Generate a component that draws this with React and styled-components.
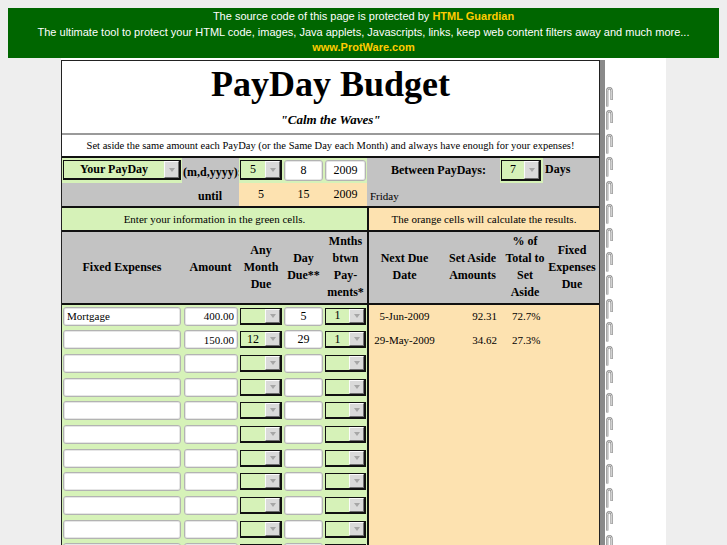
import React from 'react';
import styled, { createGlobalStyle } from 'styled-components';

const LEFT_COLS = '120px 57px 44px 41px 43px';
const MAIN_COLS = `${LEFT_COLS} 2px 71px 65px 40px 54px`;
const PAY_COLS = `${LEFT_COLS} 133px 43px 56px`;

const tones = {
  green: '#d6f2b8',
  gray: '#c3c3c3',
  orange: '#fde2b0',
  black: '#111111',
};

const GlobalStyle = createGlobalStyle`
  body {
    margin: 8px;
    background: #eeeeee;
    font-family: "Liberation Serif", "Times New Roman", serif;
    color: #000;
  }
`;

const Banner = styled.div`
  background: #006600;
  color: #fff;
  font: 11px/15.5px "Liberation Sans", Arial, sans-serif;
  text-align: center;
  padding: 1px 0 2px;
`;

const BannerLink = styled.span`
  color: #ffcc00;
  font-weight: bold;
`;

const Page = styled.div`
  width: 605px;
  margin: 0 auto;
  padding-top: 2px;
  background: #fff;
  display: flex;
  align-items: flex-start;
`;

const Sheet = styled.div`
  width: 537px;
  border: 1px solid #222;
  border-bottom: none;
  box-shadow: 5px 0 0 #8a8a8a;
  background: #fff;
`;

const Binder = styled.div`
  margin-left: 5px;
  padding-top: 27px;
  display: flex;
  flex-direction: column;
  gap: 3.6px;
`;

const TitleBlock = styled.div`
  height: 72px;
  border-bottom: 2px solid #9a9a9a;
  text-align: center;
`;

const Title = styled.h1`
  margin: 0;
  padding-top: 3px;
  font: bold 36px/41px "Liberation Serif", serif;
`;

const Subtitle = styled.div`
  margin-top: 7px;
  font: italic bold 13px/15px "Liberation Serif", serif;
`;

const Intro = styled.div`
  height: 21px;
  border-bottom: 2px solid #111;
  display: flex;
  align-items: center;
  justify-content: center;
  font-size: 10.5px;
`;

const Row = styled.div`
  display: grid;
  grid-template-columns: ${({ $cols }) => $cols};
  height: ${({ $h }) => $h}px;
  border-bottom: ${({ $rule }) => ($rule ? '2px solid #111' : 'none')};
`;

const Cell = styled.div`
  grid-column: span ${({ $span }) => $span || 1};
  background: ${({ $tone }) => tones[$tone]};
  display: flex;
  align-items: ${({ $valign }) => $valign || 'center'};
  justify-content: ${({ $justify }) => $justify || 'center'};
  padding: ${({ $pad }) => $pad || '0'};
  font-size: ${({ $size }) => $size || 12}px;
  font-weight: ${({ $bold }) => ($bold ? 'bold' : 'normal')};
  white-space: nowrap;
  min-width: 0;
`;

const HeadCell = styled.div`
  background: ${({ $tone }) => tones[$tone || 'gray']};
  display: flex;
  align-items: center;
  justify-content: center;
  text-align: center;
  font: bold 12px/17px "Liberation Serif", serif;
`;

const DataRow = styled.div`
  display: grid;
  grid-template-columns: ${MAIN_COLS};
  height: 23.67px;
`;

const EntryCell = styled.div`
  background: ${tones.green};
  display: flex;
  align-items: center;
  padding: 0 1px;
`;

const Divider = styled.div`
  background: ${tones.black};
`;

const ResultCell = styled.div`
  background: ${tones.orange};
  display: flex;
  align-items: center;
  justify-content: ${({ $justify }) => $justify || 'center'};
  padding: ${({ $pad }) => $pad || '0'};
  font-size: 11px;
  white-space: nowrap;
`;

const Field = styled.input`
  width: 100%;
  height: ${({ $h }) => $h || 19}px;
  box-sizing: border-box;
  border: 1px solid #b3b3b3;
  border-radius: 3px;
  box-shadow: inset 0 0 0 1px #e6e6e6;
  background: #fff;
  padding: 0 3px;
  color: #000;
  font: ${({ $size }) => $size || 11}px "Liberation Serif", serif;
  text-align: ${({ $align }) => $align || 'left'};
  outline: none;
`;

const SelectFrame = styled.div`
  width: 100%;
  height: ${({ $h }) => $h}px;
  box-sizing: border-box;
  display: flex;
  border-style: solid;
  border-color: #111;
  border-width: 1px 2px 2px 1px;
  font: ${({ $bold }) => ($bold ? 'bold ' : '')}12px "Liberation Serif", serif;
`;

const SelectValue = styled.span`
  flex: 1;
  align-self: center;
  text-align: center;
`;

const DropButton = styled.span`
  width: 15px;
  box-sizing: border-box;
  background: #dadada;
  border: 1px solid;
  border-color: #fbfbfb #707070 #707070 #fbfbfb;
  display: flex;
  align-items: center;
  justify-content: center;
  &::after {
    content: '';
    border-left: 3px solid transparent;
    border-right: 3px solid transparent;
    border-top: 4px solid #a6a6a6;
  }
`;

const Select = ({ value = '', h = 17, bold }) => (
  <SelectFrame $h={h} $bold={bold}>
    <SelectValue>{value}</SelectValue>
    <DropButton />
  </SelectFrame>
);

const Ring = () => (
  <svg width="9" height="20" viewBox="0 0 9 20">
    <path d="M2.2 19.5 V4.2 C2.2 1.8 3.2 1.2 4.4 1.2 C5.6 1.2 6.6 1.8 6.6 4.2 V13" fill="none" stroke="#8e8e8e" strokeWidth="2.4" />
    <path d="M2.2 19 V4.2 C2.2 1.8 3.2 1.2 4.4 1.2 C5.6 1.2 6.6 1.8 6.6 4.2 V12.5" fill="none" stroke="#ececec" strokeWidth="0.8" />
  </svg>
);

const expenses = [
  { name: 'Mortgage', amount: '400.00', month: '', day: '5', every: '1', next: '5-Jun-2009', aside: '92.31', pct: '72.7%' },
  { name: '', amount: '150.00', month: '12', day: '29', every: '1', next: '29-May-2009', aside: '34.62', pct: '27.3%' },
  ...Array.from({ length: 10 }, () => ({ name: '', amount: '', month: '', day: '', every: '', next: '', aside: '', pct: '' })),
];

const App = () => (
  <>
    <GlobalStyle />
    <Banner>
      The source code of this page is protected by <BannerLink>HTML Guardian</BannerLink>
      <br />
      The ultimate tool to protect your HTML code, images, Java applets, Javascripts, links, keep web content filters away and much more...
      <br />
      <BannerLink>www.ProtWare.com</BannerLink>
    </Banner>
    <Page>
      <Sheet>
        <TitleBlock>
          <Title>PayDay Budget</Title>
          <Subtitle>"Calm the Waves"</Subtitle>
        </TitleBlock>
        <Intro>
          Set aside the same amount each PayDay (or the Same Day each Month) and always have enough for your expenses!
        </Intro>

        <Row $cols={PAY_COLS} $h={25}>
          <Cell $tone="green" $pad="0 1px">
            <Select value="Your PayDay" h={20} bold />
          </Cell>
          <Cell $tone="gray" $bold $justify="flex-start" $pad="4px 0 0 1px">
            (m,d,yyyy):
          </Cell>
          <Cell $tone="green" $pad="0 1px">
            <Select value="5" h={20} />
          </Cell>
          <Cell $tone="green" $pad="0 1px">
            <Field readOnly value="8" $h={21} $size={12} $align="center" />
          </Cell>
          <Cell $tone="green" $pad="0 1px">
            <Field readOnly value="2009" $h={21} $size={12} $align="center" />
          </Cell>
          <Cell $tone="gray" $bold $justify="flex-start" $pad="0 0 0 24px">
            Between PayDays:
          </Cell>
          <Cell $tone="green" $pad="0 2px 0 1px">
            <Select value="7" h={21} />
          </Cell>
          <Cell $tone="gray" $bold $justify="flex-start" $pad="0 0 2px 2px">
            Days
          </Cell>
        </Row>

        <Row $cols={PAY_COLS} $h={23} $rule>
          <Cell $span={2} $tone="gray" $bold $justify="flex-end" $valign="flex-end" $pad="0 17px 2px 0">
            until
          </Cell>
          <Cell $tone="orange">5</Cell>
          <Cell $tone="orange">15</Cell>
          <Cell $tone="orange">2009</Cell>
          <Cell $span={3} $tone="gray" $size={11} $justify="flex-start" $valign="flex-end" $pad="0 0 4px 3px">
            Friday
          </Cell>
        </Row>

        <Row $cols={MAIN_COLS} $h={22} $rule>
          <Cell $span={5} $tone="green" $size={11}>
            Enter your information in the green cells.
          </Cell>
          <Divider />
          <Cell $span={4} $tone="orange" $size={11}>
            The orange cells will calculate the results.
          </Cell>
        </Row>

        <Row $cols={MAIN_COLS} $h={71} $rule>
          <HeadCell>Fixed Expenses</HeadCell>
          <HeadCell>Amount</HeadCell>
          <HeadCell>Any<br />Month<br />Due</HeadCell>
          <HeadCell>Day<br />Due**</HeadCell>
          <HeadCell>Mnths<br />btwn<br />Pay-<br />ments*</HeadCell>
          <Divider />
          <HeadCell>Next Due<br />Date</HeadCell>
          <HeadCell>Set Aside<br />Amounts</HeadCell>
          <HeadCell>% of<br />Total to<br />Set<br />Aside</HeadCell>
          <HeadCell>Fixed<br />Expenses<br />Due</HeadCell>
        </Row>

        {expenses.map((e, i) => (
          <DataRow key={i}>
            <EntryCell>
              <Field readOnly value={e.name} />
            </EntryCell>
            <EntryCell>
              <Field readOnly value={e.amount} $align="right" style={{ marginLeft: 1 }} />
            </EntryCell>
            <EntryCell>
              <Select value={e.month} />
            </EntryCell>
            <EntryCell>
              <Field readOnly value={e.day} $size={12} $align="center" />
            </EntryCell>
            <EntryCell>
              <Select value={e.every} />
            </EntryCell>
            <Divider />
            <ResultCell>{e.next}</ResultCell>
            <ResultCell $justify="flex-end" $pad="0 8px 0 0">{e.aside}</ResultCell>
            <ResultCell $justify="flex-start" $pad="0 0 0 7px">{e.pct}</ResultCell>
            <ResultCell />
          </DataRow>
        ))}
      </Sheet>
      <Binder>
        {Array.from({ length: 22 }, (_, i) => (
          <Ring key={i} />
        ))}
      </Binder>
    </Page>
  </>
);

export default App;
